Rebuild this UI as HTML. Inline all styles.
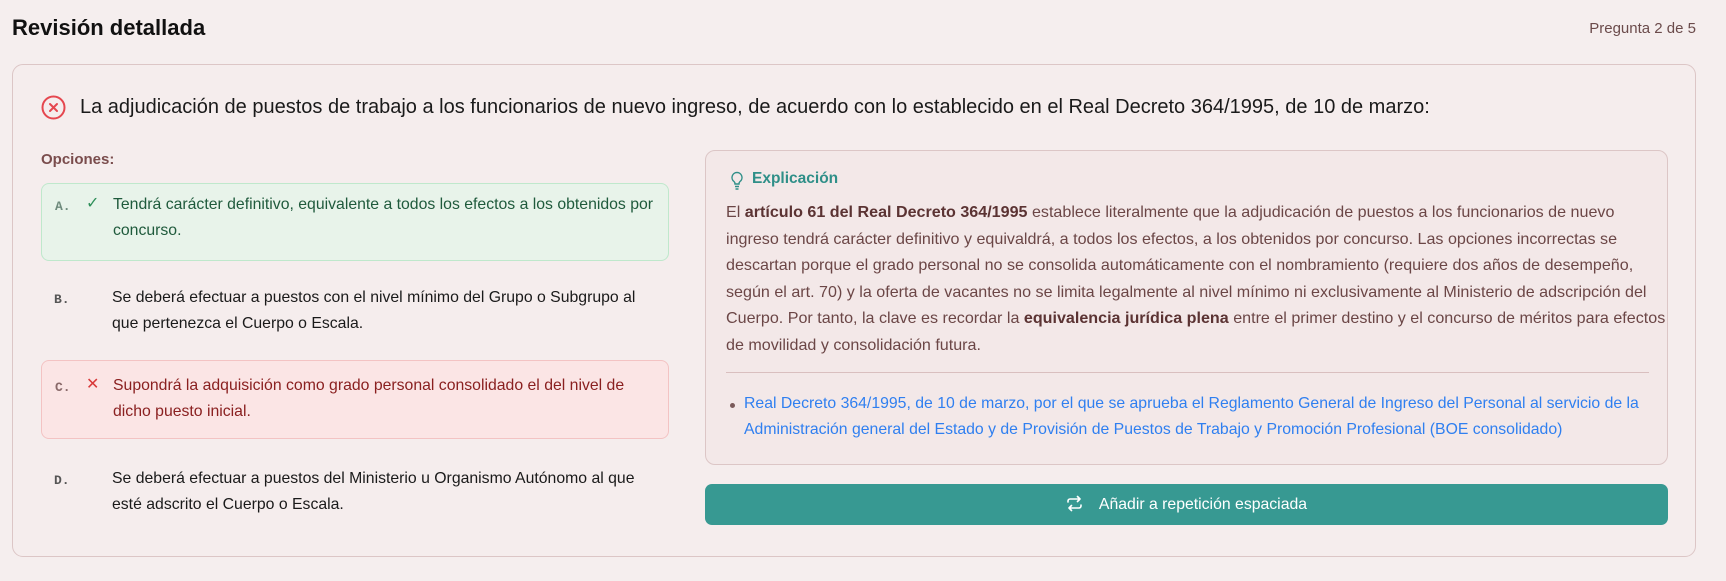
<!DOCTYPE html>
<html><head><meta charset="utf-8"><style>
*{box-sizing:border-box;margin:0;padding:0}
body{width:1726px;height:581px;background:#f5eeee;font-family:"Liberation Sans",sans-serif;position:relative;overflow:hidden;color:#222}
.abs{position:absolute}
h1{position:absolute;left:12px;top:15px;font-size:22px;font-weight:bold;color:#111}
.pg{position:absolute;right:30px;top:20px;font-size:15px;color:#6b4b4b}
.card{position:absolute;left:12px;top:64px;width:1684px;height:493px;border:1px solid #dcc6c6;border-radius:11px;background:#f5eded}
.q{position:absolute;left:80px;top:96px;font-size:20px;color:#1a1a1a}
.opth{position:absolute;left:41px;top:151px;font-size:15px;font-weight:bold;color:#7a4d4d}
.opt{position:absolute;left:41px;width:628px;font-size:15.8px;line-height:26px;border-radius:8px}
.opt .l{position:absolute;left:13px;font-family:"Liberation Mono",monospace;font-weight:bold;font-size:13px;color:#555}
.opt .m{position:absolute;left:44px;font-size:16px}
.opt .t{position:absolute;left:71px;right:10px}
.exp{position:absolute;left:705px;top:150px;width:963px;height:315px;border:1px solid #dcc6c6;border-radius:10px;background:#f3e8e8}
.exp .h{position:absolute;left:46px;top:19px;font-size:15.5px;font-weight:bold;color:#2f8f88}
.exp .b{position:absolute;left:20px;top:48px;width:935px;font-size:16.1px;line-height:26.5px;color:#6b4646;white-space:nowrap}
.exp .b b{color:#5b3333}
.exp .hr{position:absolute;left:20px;right:18px;top:221px;border-top:1px solid #d9bfbf}
.exp .lk{position:absolute;left:38px;top:240px;width:905px;font-size:15.8px;line-height:25.5px;color:#2f7ff0}
.exp .dot{position:absolute;left:24px;top:252px;width:5px;height:5px;border-radius:50%;background:#7a5a5a}
.btn{position:absolute;left:705px;top:484px;width:963px;height:41px;border-radius:7px;background:#379992;color:#fff;font-size:15.8px;text-align:center;line-height:41px}
</style></head><body>
<h1>Revisión detallada</h1>
<div class="pg">Pregunta 2 de 5</div>
<div class="card"></div>
<svg class="abs" style="left:41px;top:95px" width="25" height="25" viewBox="0 0 25 25"><circle cx="12.5" cy="12.5" r="11" fill="none" stroke="#e5474f" stroke-width="2"/><path d="M9 9l7 7M16 9l-7 7" stroke="#e5474f" stroke-width="2" stroke-linecap="round"/></svg>
<div class="q">La adjudicación de puestos de trabajo a los funcionarios de nuevo ingreso, de acuerdo con lo establecido en el Real Decreto 364/1995, de 10 de marzo:</div>
<div class="opth">Opciones:</div>
<div class="opt" style="top:183px;height:78px;background:#e8f3ea;border:1px solid #bfe8cc;color:#1f5a3c">
<span class="l" style="top:10px;color:#6e8a7c">A.</span><span class="m" style="top:7px;color:#2f8f5a">✓</span><div class="t" style="top:8px">Tendrá carácter definitivo, equivalente a todos los efectos a los obtenidos por concurso.</div></div>
<div class="opt" style="top:284px;height:56px;color:#1a1a1a">
<span class="l" style="top:3px">B.</span><div class="t" style="top:1px">Se deberá efectuar a puestos con el nivel mínimo del Grupo o Subgrupo al que pertenezca el Cuerpo o Escala.</div></div>
<div class="opt" style="top:360px;height:79px;background:#fbe5e5;border:1px solid #f3c3c3;color:#8a2020">
<span class="l" style="top:14px;color:#8a6a6a">C.</span><span class="m" style="top:11px;color:#d83a3a">✕</span><div class="t" style="top:12px">Supondrá la adquisición como grado personal consolidado el del nivel de dicho puesto inicial.</div></div>
<div class="opt" style="top:465px;height:56px;color:#1a1a1a">
<span class="l" style="top:3px">D.</span><div class="t" style="top:1px">Se deberá efectuar a puestos del Ministerio u Organismo Autónomo al que esté adscrito el Cuerpo o Escala.</div></div>
<div class="exp">
<svg class="abs" style="left:24px;top:20px" width="14" height="20" viewBox="0 0 14 20"><path d="M7 1.5a5 5 0 0 0-3 9c.8.7 1 1.5 1 2.5h4c0-1 .2-1.8 1-2.5a5 5 0 0 0-3-9z" fill="none" stroke="#2f8f88" stroke-width="1.4"/><path d="M5 15.5h4M5.5 18h3" stroke="#2f8f88" stroke-width="1.4"/></svg>
<div class="h">Explicación</div>
<div class="b">El <b>artículo 61 del Real Decreto 364/1995</b> establece literalmente que la adjudicación de puestos a los funcionarios de nuevo<br>ingreso tendrá carácter definitivo y equivaldrá, a todos los efectos, a los obtenidos por concurso. Las opciones incorrectas se<br>descartan porque el grado personal no se consolida automáticamente con el nombramiento (requiere dos años de desempeño,<br>según el art. 70) y la oferta de vacantes no se limita legalmente al nivel mínimo ni exclusivamente al Ministerio de adscripción del<br>Cuerpo. Por tanto, la clave es recordar la <b>equivalencia jurídica plena</b> entre el primer destino y el concurso de méritos para efectos<br>de movilidad y consolidación futura.</div>
<div class="hr"></div>
<div class="dot"></div>
<div class="lk">Real Decreto 364/1995, de 10 de marzo, por el que se aprueba el Reglamento General de Ingreso del Personal al servicio de la Administración general del Estado y de Provisión de Puestos de Trabajo y Promoción Profesional (BOE consolidado)</div>
</div>
<div class="btn"><svg style="vertical-align:-3px;margin-right:16px" width="17" height="17" viewBox="0 0 17 17" fill="none" stroke="#fff" stroke-width="1.6" stroke-linecap="round" stroke-linejoin="round"><path d="M2 7V6a2 2 0 0 1 2-2h10M11.5 1.5L14 4l-2.5 2.5M15 10v1a2 2 0 0 1-2 2H3M5.5 15.5L3 13l2.5-2.5"/></svg>Añadir a repetición espaciada</div>
</body></html>
